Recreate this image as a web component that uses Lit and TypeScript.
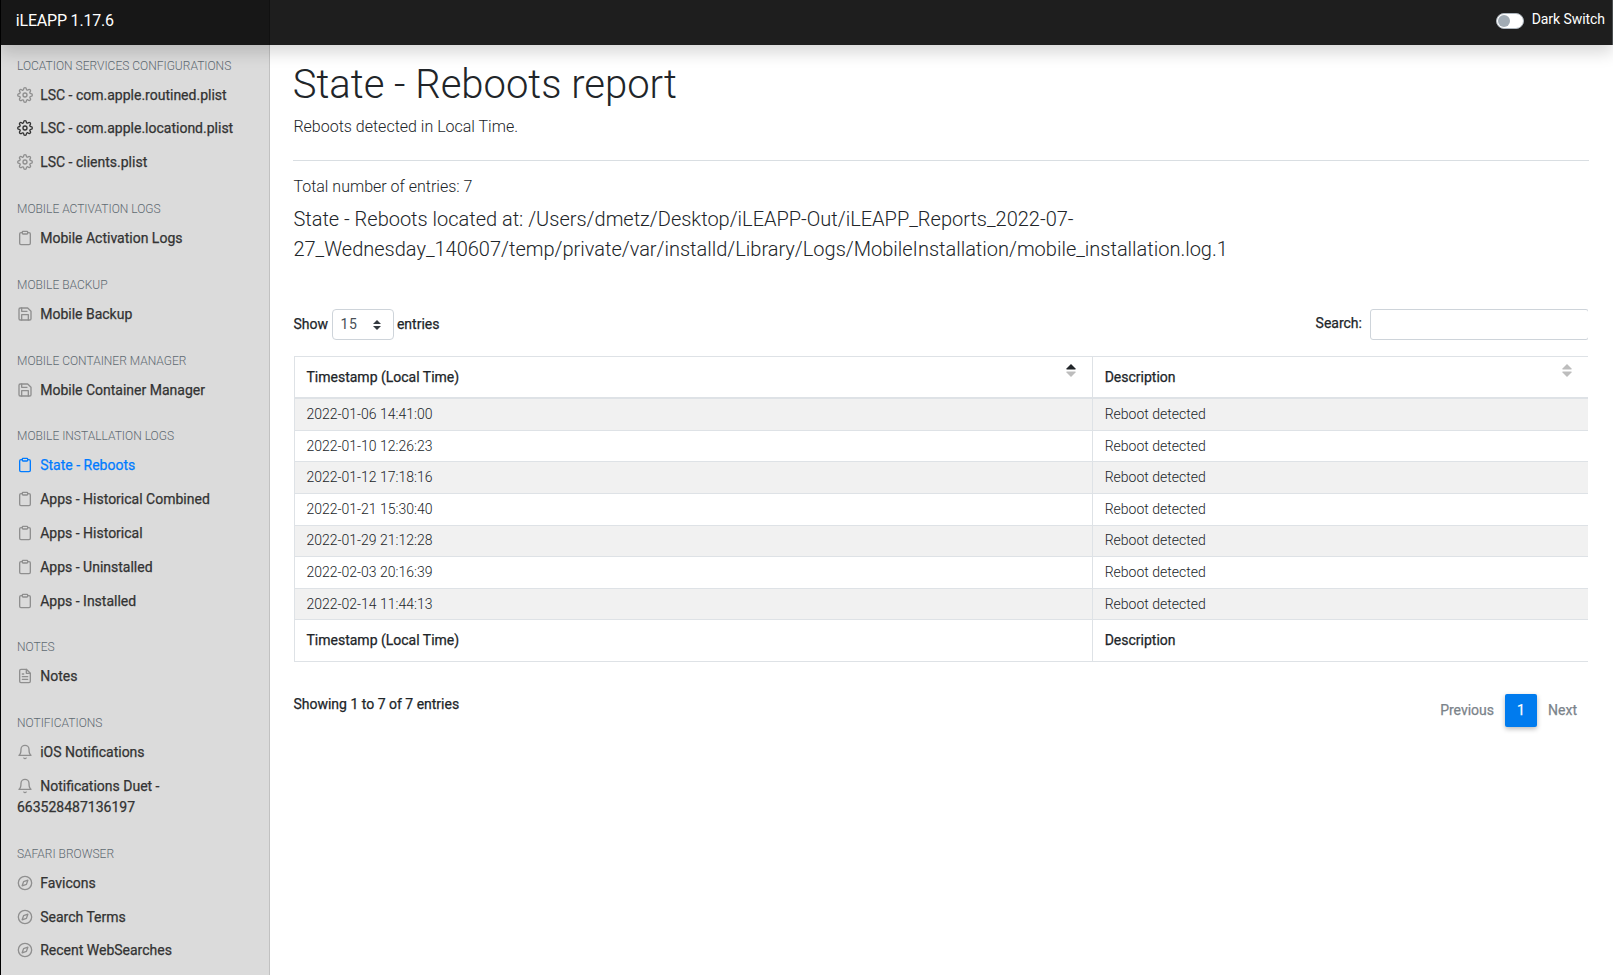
import { LitElement, html, css, svg, nothing } from "lit";
import { classMap } from "lit/directives/class-map.js";

type IconName = "settings" | "clipboard" | "save" | "file" | "bell" | "compass";

interface NavItem {
  label: string;
  icon: IconName;
  active?: boolean;
  strong?: boolean;
  tight?: boolean;
}

interface NavGroup {
  title: string;
  tight?: boolean;
  items: NavItem[];
}

const ICONS = {
  settings: svg`<circle cx="12" cy="12" r="3"></circle><path d="M19.4 15a1.65 1.65 0 0 0 .33 1.82l.06.06a2 2 0 0 1 0 2.83 2 2 0 0 1-2.83 0l-.06-.06a1.65 1.65 0 0 0-1.82-.33 1.65 1.65 0 0 0-1 1.51V21a2 2 0 0 1-2 2 2 2 0 0 1-2-2v-.09A1.65 1.65 0 0 0 9 19.4a1.65 1.65 0 0 0-1.82.33l-.06.06a2 2 0 0 1-2.83 0 2 2 0 0 1 0-2.83l.06-.06a1.65 1.65 0 0 0 .33-1.82 1.65 1.65 0 0 0-1.51-1H3a2 2 0 0 1-2-2 2 2 0 0 1 2-2h.09A1.65 1.65 0 0 0 4.6 9a1.65 1.65 0 0 0-.33-1.82l-.06-.06a2 2 0 0 1 0-2.83 2 2 0 0 1 2.83 0l.06.06a1.65 1.65 0 0 0 1.82.33H9a1.65 1.65 0 0 0 1-1.51V3a2 2 0 0 1 2-2 2 2 0 0 1 2 2v.09a1.65 1.65 0 0 0 1 1.51 1.65 1.65 0 0 0 1.82-.33l.06-.06a2 2 0 0 1 2.83 0 2 2 0 0 1 0 2.83l-.06.06a1.65 1.65 0 0 0-.33 1.82V9a1.65 1.65 0 0 0 1.51 1H21a2 2 0 0 1 2 2 2 2 0 0 1-2 2h-.09a1.65 1.65 0 0 0-1.51 1z"></path>`,
  clipboard: svg`<path d="M16 4h2a2 2 0 0 1 2 2v14a2 2 0 0 1-2 2H6a2 2 0 0 1-2-2V6a2 2 0 0 1 2-2h2"></path><rect x="8" y="2" width="8" height="4" rx="1" ry="1"></rect>`,
  save: svg`<path d="M19 21H5a2 2 0 0 1-2-2V5a2 2 0 0 1 2-2h11l5 5v11a2 2 0 0 1-2 2z"></path><polyline points="17 21 17 13 7 13 7 21"></polyline><polyline points="7 3 7 8 15 8"></polyline>`,
  file: svg`<path d="M14 2H6a2 2 0 0 0-2 2v16a2 2 0 0 0 2 2h12a2 2 0 0 0 2-2V8z"></path><polyline points="14 2 14 8 20 8"></polyline><line x1="16" y1="13" x2="8" y2="13"></line><line x1="16" y1="17" x2="8" y2="17"></line><polyline points="10 9 9 9 8 9"></polyline>`,
  bell: svg`<path d="M18 8A6 6 0 0 0 6 8c0 7-3 9-3 9h18s-3-2-3-9"></path><path d="M13.73 21a2 2 0 0 1-3.46 0"></path>`,
  compass: svg`<circle cx="12" cy="12" r="10"></circle><polygon points="16.24 7.76 14.12 14.12 7.76 16.24 9.88 9.88 16.24 7.76"></polygon>`,
};

const NAV: NavGroup[] = [
  {
    title: "Location Services Configurations",
    items: [
      { label: "LSC - com.apple.routined.plist", icon: "settings", tight: true },
      { label: "LSC - com.apple.locationd.plist", icon: "settings", strong: true },
      { label: "LSC - clients.plist", icon: "settings" },
    ],
  },
  { title: "Mobile Activation Logs", items: [{ label: "Mobile Activation Logs", icon: "clipboard" }] },
  { title: "Mobile Backup", items: [{ label: "Mobile Backup", icon: "save" }] },
  { title: "Mobile Container Manager", items: [{ label: "Mobile Container Manager", icon: "save" }] },
  {
    title: "Mobile Installation Logs",
    tight: true,
    items: [
      { label: "State - Reboots", icon: "clipboard", active: true },
      { label: "Apps - Historical Combined", icon: "clipboard" },
      { label: "Apps - Historical", icon: "clipboard" },
      { label: "Apps - Uninstalled", icon: "clipboard" },
      { label: "Apps - Installed", icon: "clipboard" },
    ],
  },
  { title: "Notes", tight: true, items: [{ label: "Notes", icon: "file" }] },
  {
    title: "Notifications",
    items: [
      { label: "iOS Notifications", icon: "bell" },
      { label: "Notifications Duet - 663528487136197", icon: "bell" },
    ],
  },
  {
    title: "Safari Browser",
    items: [
      { label: "Favicons", icon: "compass" },
      { label: "Search Terms", icon: "compass", tight: true },
      { label: "Recent WebSearches", icon: "compass" },
    ],
  },
];

const ENTRIES = [
  "2022-01-06 14:41:00",
  "2022-01-10 12:26:23",
  "2022-01-12 17:18:16",
  "2022-01-21 15:30:40",
  "2022-01-29 21:12:28",
  "2022-02-03 20:16:39",
  "2022-02-14 11:44:13",
];

class AppHeader extends LitElement {
  static styles = css`
    :host {
      display: flex;
      height: 45px;
      background: #1e1e1e;
      color: #fff;
      border-right: 1px solid #4a4e50;
      box-sizing: border-box;
      box-shadow: 0 8px 16px rgba(0, 0, 0, 0.15);
      position: relative;
      z-index: 2;
    }
    .brand {
      width: 269px;
      box-sizing: border-box;
      padding: 9px 0 0 14.8px;
      background: #171717;
      border-right: 1px solid #111;
      font-size: 16px;
      line-height: 24px;
      letter-spacing: -0.2px;
    }
    .switch {
      margin-left: auto;
      display: flex;
      align-items: flex-start;
      padding-right: 7px;
    }
    .track {
      width: 28px;
      height: 16px;
      box-sizing: border-box;
      margin: 13px 7.7px 0 0;
      padding: 1px;
      border: 1px solid #adb5bd;
      border-radius: 8px;
      background: #fff;
    }
    .knob {
      width: 12px;
      height: 12px;
      border-radius: 50%;
      background: #a1abb4;
    }
    .label {
      font-size: 14px;
      line-height: 21px;
      padding-top: 9px;
      letter-spacing: -0.06px;
    }
  `;
  render() {
    return html`
      <div class="brand">iLEAPP 1.17.6</div>
      <div class="switch">
        <div class="track"><div class="knob"></div></div>
        <div class="label">Dark Switch</div>
      </div>
    `;
  }
}
customElements.define("app-header", AppHeader);

class AppSidebar extends LitElement {
  static styles = css`
    :host {
      display: block;
      width: 269px;
      box-sizing: border-box;
      background: #dbdbdb;
      border-right: 1px solid #c1c1c1;
      overflow: hidden;
      padding: 0 0 0 16px;
    }
    .title {
      padding: 20px 0 4px;
      font-size: 12px;
      line-height: 18px;
      font-weight: 300;
      text-transform: uppercase;
      color: #5f6a72;
      white-space: nowrap;
    }
    .title.tight {
      padding-top: 19px;
    }
    .group:first-child .title {
      padding-top: 12px;
    }
    .item {
      padding: 6px 80px 7px 0;
      font-size: 14px;
      line-height: 21px;
      font-weight: 400;
      -webkit-text-stroke: 0.25px currentColor;
      color: #333;
    }
    .item.wide {
      padding-right: 0;
      white-space: nowrap;
    }
    .item.tight {
      padding-bottom: 6px;
    }
    .icon {
      width: 16px;
      height: 16px;
      margin-right: 3.7px;
      vertical-align: text-bottom;
      fill: none;
      stroke: #8f8f8f;
      stroke-width: 2;
      stroke-linecap: round;
      stroke-linejoin: round;
    }
    .strong .icon {
      stroke: #333;
    }
    .active {
      color: #007bff;
    }
    .active .icon {
      stroke: #007bff;
    }
  `;
  render() {
    return NAV.map(
      (g) => html`<div class="group">
        <div class=${classMap({ title: true, tight: !!g.tight })}>${g.title}</div>
        ${g.items.map(
          (i) => html`<div
            class=${classMap({
              item: true,
              wide: i.label.length < 34,
              active: !!i.active,
              strong: !!i.strong,
              tight: !!i.tight,
            })}
          ><svg class="icon" viewBox="0 0 24 24">${ICONS[i.icon]}</svg> ${i.label}</div>`
        )}
      </div>`
    );
  }
}
customElements.define("app-sidebar", AppSidebar);

class ReportTable extends LitElement {
  static styles = css`
    :host {
      display: block;
      overflow: hidden;
      width: 1294.6px;
      font-size: 14px;
      line-height: 21px;
      color: #212529;
    }
    .controls {
      display: flex;
      justify-content: space-between;
      align-items: flex-start;
      height: 47px;
      font-weight: 400;
    }
    .label,
    .head,
    .foot,
    .bottom {
      -webkit-text-stroke: 0.25px currentColor;
    }
    .length,
    .search {
      display: flex;
      align-items: flex-start;
    }
    .label {
      padding-top: 5px;
    }
    .search .label {
      padding-top: 4px;
    }
    .select {
      display: flex;
      align-items: center;
      justify-content: space-between;
      box-sizing: border-box;
      width: 62px;
      height: 31px;
      margin: 0 3px 0 4px;
      padding: 0 12px 0 7.5px;
      border: 1px solid #ced4da;
      border-radius: 4px;
      font-weight: 400;
      letter-spacing: 0.6px;
      color: #495057;
      background: #fff;
    }
    .select svg {
      width: 8px;
      height: 10px;
      fill: #343a40;
    }
    .input {
      box-sizing: border-box;
      width: 219px;
      height: 31px;
      margin: 0 -1px 0 8px;
      border: 1px solid #ced4da;
      border-radius: 3px;
    }
    .table {
      margin-left: 0.6px;
      border-top: 1px solid #dee2e6;
      border-left: 1px solid #dee2e6;
      box-sizing: border-box;
    }
    .row {
      display: grid;
      grid-template-columns: 797px 1fr;
      box-sizing: border-box;
      height: 32px;
      border-bottom: 1px solid #dee2e6;
      font-weight: 300;
    }
    .row.short {
      height: 31px;
    }
    .row.odd {
      background: #f1f1f1;
    }
    .row.head {
      height: 42px;
      border-bottom-width: 2px;
      font-weight: 400;
    }
    .row.foot {
      height: 42px;
      font-weight: 400;
    }
    .cell {
      display: flex;
      justify-content: space-between;
      padding: 5px 16px 0 11.5px;
    }
    .cell + .cell {
      border-left: 1px solid #dee2e6;
      padding-left: 11.7px;
    }
    .row:nth-child(6) .cell {
      padding-top: 4px;
    }
    .head .cell,
    .foot .cell {
      padding-top: 10px;
    }
    .head .cell {
      padding-top: 9.5px;
    }
    .sort {
      width: 10px;
      height: 13px;
      margin-top: -2.2px;
      fill: #bdbdbd;
    }
    .sort .on {
      fill: #212529;
    }
    .bottom {
      display: flex;
      justify-content: space-between;
      align-items: flex-start;
      padding-top: 32px;
      height: 50px;
      font-weight: 400;
    }
    .pages {
      display: flex;
      line-height: 33px;
      color: #7b838a;
      padding-right: 11px;
    }
    .page {
      width: 32px;
      height: 33px;
      margin: 0 11px;
      border-radius: 2px;
      background: #007bee;
      color: #fff;
      text-align: center;
      box-shadow: 0 2px 5px rgba(0, 0, 0, 0.28);
    }
  `;
  private sort(active: boolean) {
    return html`<svg class="sort" viewBox="0 0 10 13">
      <path class=${active ? "on" : ""} d="M5 0L9.5 4.4V5.6H0.5V4.4Z"></path>
      <path d="M5 13L9.5 8.6V7.4H0.5V8.6Z"></path>
    </svg>`;
  }
  private row(kind: Record<string, boolean>, a: string, b: string) {
    return html`<div class=${classMap({ row: true, ...kind })}>
      <div class="cell"><span>${a}</span>${kind.head ? this.sort(true) : nothing}</div>
      <div class="cell"><span>${b}</span>${kind.head ? this.sort(false) : nothing}</div>
    </div>`;
  }
  render() {
    return html`
      <div class="controls">
        <div class="length">
          <span class="label">Show</span>
          <div class="select">15<svg viewBox="0 0 4 5"><path d="M2 0L0 2h4zm0 5L0 3h4z"></path></svg></div>
          <span class="label">entries</span>
        </div>
        <div class="search"><span class="label">Search:</span><div class="input"></div></div>
      </div>
      <div class="table">
        ${this.row({ head: true }, "Timestamp (Local Time)", "Description")}
        ${ENTRIES.map((e, i) =>
          this.row({ odd: i % 2 === 0, short: i === 1 || i === 4 || i === 6 }, e, "Reboot detected")
        )}
        ${this.row({ foot: true }, "Timestamp (Local Time)", "Description")}
      </div>
      <div class="bottom">
        <span>Showing 1 to 7 of 7 entries</span>
        <div class="pages"><span>Previous</span><span class="page">1</span><span>Next</span></div>
      </div>
    `;
  }
}
customElements.define("report-table", ReportTable);

class AppRoot extends LitElement {
  static styles = css`
    :host {
      display: flex;
      flex-direction: column;
      box-sizing: border-box;
      height: 975px;
      overflow: hidden;
      border-left: 1px solid #000;
      background: #fff;
      font-family: Roboto, sans-serif;
      font-weight: 400;
      color: #212529;
    }
    .body {
      display: flex;
      flex: 1;
      min-height: 0;
    }
    .main {
      flex: 1;
      padding: 15.5px 24px 0 23.4px;
      font-weight: 300;
    }
    .title {
      margin: 0 0 0 -0.6px;
      font-size: 40px;
      line-height: 48px;
      font-weight: 300;
      letter-spacing: -0.01px;
    }
    .text {
      margin: 6px 0 0;
      font-size: 16px;
      line-height: 24px;
    }
    .rule {
      height: 1px;
      margin: 21.5px 0 14px;
      background: #d9dee2;
    }
    .total {
      margin: 0;
      font-size: 16px;
      line-height: 24px;
    }
    .path {
      margin: 5px 0 45px;
      font-size: 20px;
      line-height: 30px;
      font-weight: 300;
      letter-spacing: -0.008px;
    }
  `;
  render() {
    return html`
      <app-header></app-header>
      <div class="body">
        <app-sidebar></app-sidebar>
        <div class="main">
          <h1 class="title">State - Reboots report</h1>
          <p class="text">Reboots detected in Local Time.</p>
          <div class="rule"></div>
          <p class="total">Total number of entries: 7</p>
          <h5 class="path">
            State - Reboots located at: /Users/dmetz/Desktop/iLEAPP-Out/iLEAPP_Reports_2022-07-<br />27_Wednesday_140607/temp/private/var/installd/Library/Logs/MobileInstallation/mobile_installation.log.1
          </h5>
          <report-table></report-table>
        </div>
      </div>
    `;
  }
}
customElements.define("app-root", AppRoot);
